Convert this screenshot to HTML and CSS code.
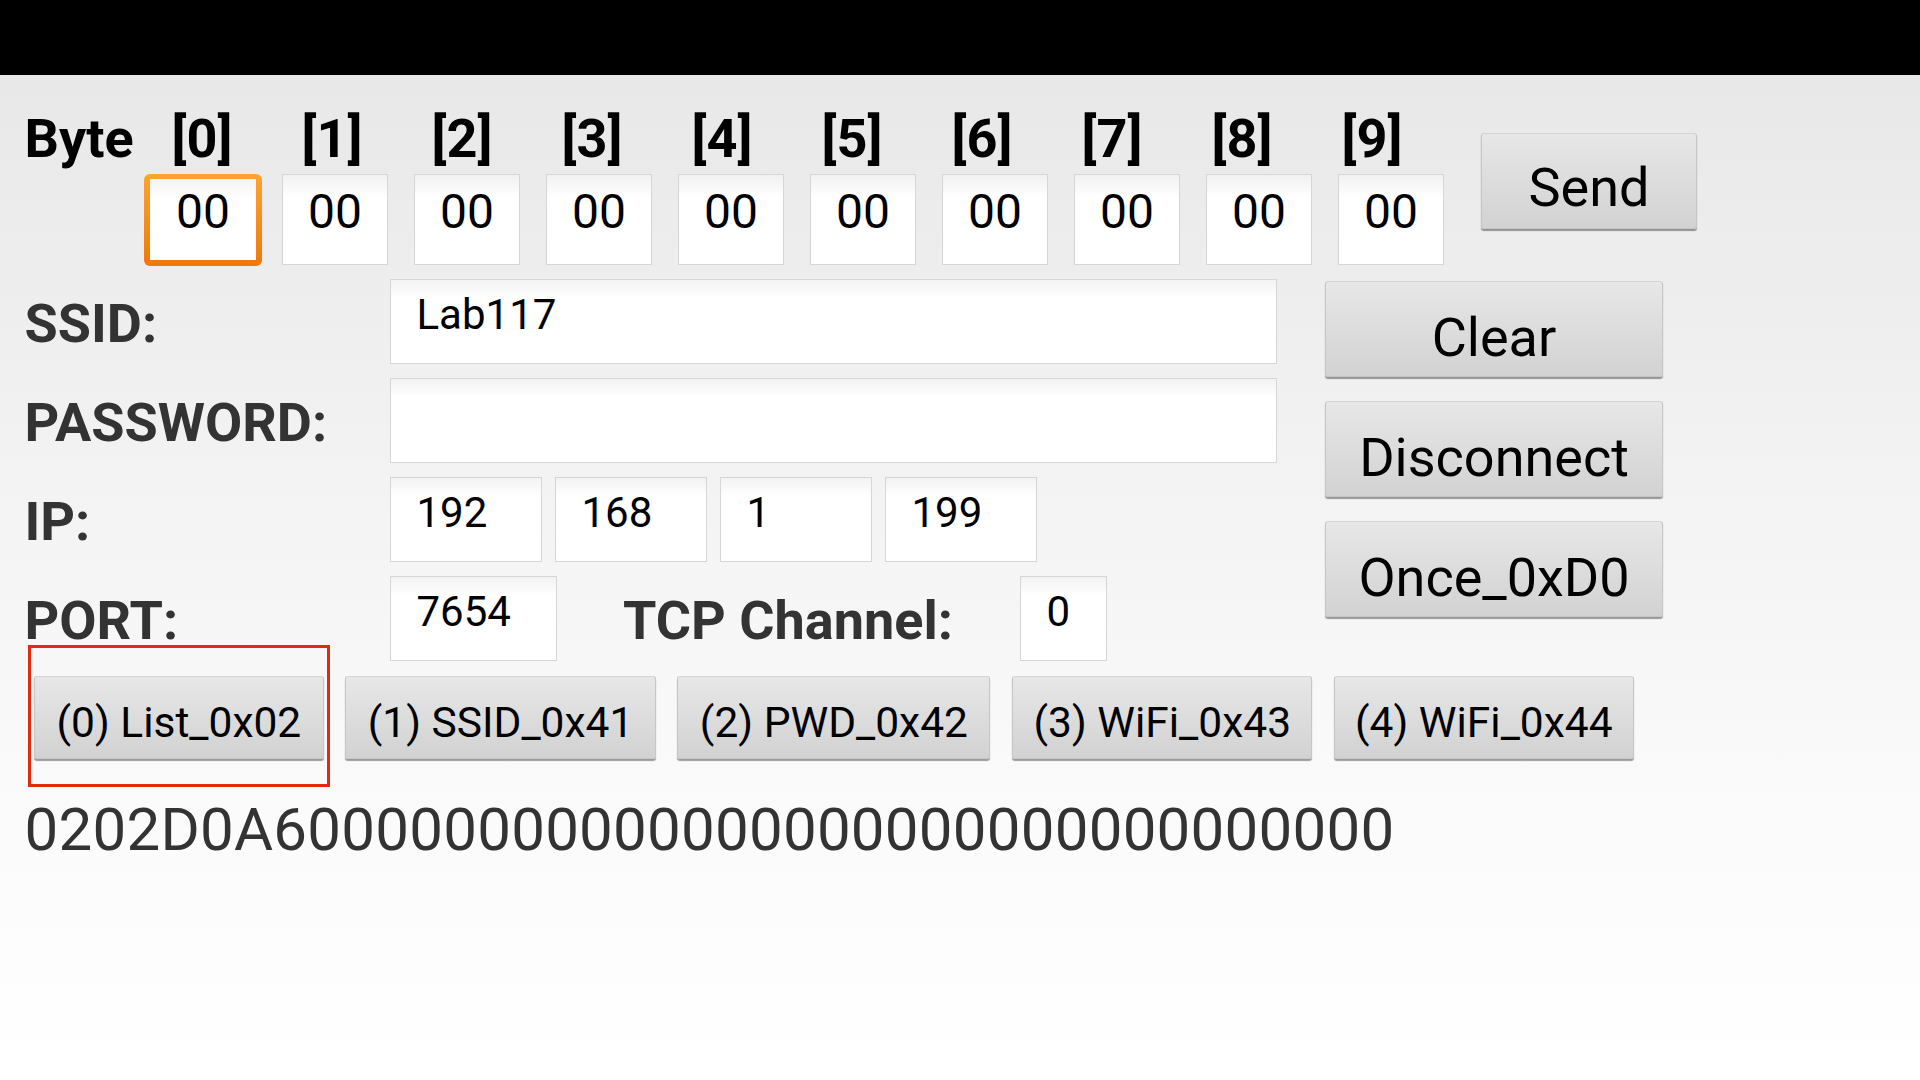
FILE: index.html
```html
<!DOCTYPE html>
<html lang="en">
<head>
<meta charset="utf-8">
<title>Byte sender</title>
<link rel="stylesheet" href="styles.css">
</head>
<body>
<div class="statusbar"></div>
<div class="screen">
  <div class="byte-row">
    <div class="byte-grid">
      <div class="byte-labels">
        <span class="byte-word">Byte</span>
        <span class="idx">[0]</span><span class="idx">[1]</span><span class="idx">[2]</span><span class="idx">[3]</span><span class="idx">[4]</span><span class="idx">[5]</span><span class="idx">[6]</span><span class="idx">[7]</span><span class="idx">[8]</span><span class="idx">[9]</span>
      </div>
      <div class="byte-boxes">
        <div class="hexbox focus">00</div>
        <div class="hexbox">00</div>
        <div class="hexbox">00</div>
        <div class="hexbox">00</div>
        <div class="hexbox">00</div>
        <div class="hexbox">00</div>
        <div class="hexbox">00</div>
        <div class="hexbox">00</div>
        <div class="hexbox">00</div>
        <div class="hexbox">00</div>
      </div>
    </div>
    <div class="btn send">Send</div>
  </div>

  <div class="main">
    <div class="form">
      <div class="row">
        <div class="label">SSID:</div>
        <div class="field w-wide">Lab117</div>
      </div>
      <div class="row">
        <div class="label">PASSWORD:</div>
        <div class="field w-wide"></div>
      </div>
      <div class="row">
        <div class="label">IP:</div>
        <div class="ip-group">
          <div class="field w-ip">192</div>
          <div class="field w-ip">168</div>
          <div class="field w-ip">1</div>
          <div class="field w-ip">199</div>
        </div>
      </div>
      <div class="row">
        <div class="label">PORT:</div>
        <div class="field w-port">7654</div>
        <div class="label tcp-label">TCP Channel:</div>
        <div class="field w-tcp">0</div>
      </div>
    </div>
    <div class="side">
      <div class="btn side-btn">Clear</div>
      <div class="btn side-btn">Disconnect</div>
      <div class="btn side-btn">Once_0xD0</div>
    </div>
  </div>

  <div class="cmd-row">
    <div class="btn cmd highlight">(0) List_0x02</div>
    <div class="btn cmd">(1) SSID_0x41</div>
    <div class="btn cmd">(2) PWD_0x42</div>
    <div class="btn cmd tight">(3) WiFi_0x43</div>
    <div class="btn cmd tight">(4) WiFi_0x44</div>
  </div>

  <div class="hexline">0202D0A600000000000000000000000000000000</div>
</div>
</body>
</html>
```

FILE: styles.css
```css
html, body {
  margin: 0;
  padding: 0;
}

body {
  width: 1920px;
  height: 1080px;
  overflow: hidden;
  font-family: Roboto, "Noto Sans", "Liberation Sans", sans-serif;
  background: #fff;
}

.statusbar {
  height: 75px;
  background: #000;
}

.screen {
  height: 1005px;
  box-sizing: border-box;
  padding: 36.5px 0 0 22px;
  background: linear-gradient(#e8e8e8 0%, #f4f4f4 45%, #fcfcfc 80%, #ffffff 100%);
}

/* ---------- Byte row ---------- */
.byte-row {
  display: flex;
  align-items: flex-start;
}

.byte-labels {
  display: flex;
  height: 54px;
  padding-left: 2.5px;
  font-weight: 700;
  font-size: 54px;
  line-height: 54px;
  color: #000;
}

.byte-word {
  width: 147px;
}

.idx {
  width: 130px;
}

.byte-boxes {
  display: flex;
  align-items: flex-start;
  gap: 26px;
  margin: 8.5px 0 0 128px;
}

.hexbox {
  width: 106px;
  height: 91px;
  box-sizing: border-box;
  border: 1px solid #d6d6d6;
  background: linear-gradient(#f1f1f1, #ffffff 25%);
  font-size: 48px;
  line-height: 48px;
  text-align: center;
  padding-top: 12.6px;
  color: #000;
}

.hexbox.focus {
  margin: 0 -6px;
  width: 118px;
  height: 92px;
  border: 6px solid transparent;
  border-top-width: 5px;
  border-radius: 6px;
  padding-top: 8.6px;
  background:
    linear-gradient(#f4f4f4, #ffffff 25%) padding-box,
    linear-gradient(#fca434, #ee780b) border-box;
}

/* ---------- Buttons ---------- */
.btn {
  box-sizing: border-box;
  height: 96px;
  padding-top: 27px;
  border: 1px solid #c6c6c6;
  border-top-color: #d4d4d4;
  border-radius: 3px;
  background: linear-gradient(#e7e7e7, #d2d2d2);
  box-shadow: 0 2px 1px rgba(0, 0, 0, 0.38);
  font-size: 54px;
  line-height: 54px;
  text-align: center;
  color: #000;
  white-space: nowrap;
}

.send {
  width: 216px;
  margin: 21.5px 0 0 9.5px;
}

/* ---------- Form ---------- */
.main {
  display: flex;
  align-items: flex-start;
  margin-top: 13px;
}

.form {
  width: 1255px;
  display: flex;
  flex-direction: column;
  gap: 14px;
}

.row {
  display: flex;
  align-items: flex-start;
}

.label {
  box-sizing: border-box;
  width: 368px;
  padding-left: 2.5px;
  margin-top: 17.5px;
  font-weight: 700;
  font-size: 54px;
  line-height: 54px;
  color: #333;
  white-space: nowrap;
}

.tcp-label {
  width: 397px;
  padding-left: 0;
  margin-left: 66px;
}

.field {
  height: 85px;
  box-sizing: border-box;
  border: 1px solid #d6d6d6;
  background: linear-gradient(#f2f2f2, #ffffff 22%);
  font-size: 42px;
  line-height: 42px;
  padding: 13.6px 0 0 25.5px;
  color: #000;
}

.w-wide { width: 887px; }
.w-ip { width: 152px; }
.w-port { width: 167px; }
.w-tcp { width: 87px; }

.ip-group {
  display: flex;
  gap: 13px;
}

.side {
  margin: 2px 0 0 48px;
  display: flex;
  flex-direction: column;
  gap: 24px;
}

.side-btn {
  width: 338px;
  padding-top: 29px;
}

/* ---------- Command buttons ---------- */
.cmd-row {
  display: flex;
  gap: 21.5px;
  margin-top: 15px;
  padding-left: 12px;
}

.cmd {
  height: 83px;
  padding: 25px 21.5px 0;
  font-size: 42.5px;
  line-height: 42.5px;
}

.cmd.tight {
  padding-left: 20.5px;
  padding-right: 20px;
}

.highlight {
  position: relative;
}

.highlight::after {
  content: "";
  position: absolute;
  left: -7px;
  right: -7px;
  top: -32px;
  bottom: -29px;
  border: 3px solid #e5290e;
  pointer-events: none;
}

/* ---------- Output line ---------- */
.hexline {
  margin-top: 41px;
  padding-left: 2.5px;
  font-size: 60px;
  line-height: 60px;
  letter-spacing: 0.25px;
  color: #333;
}
```
